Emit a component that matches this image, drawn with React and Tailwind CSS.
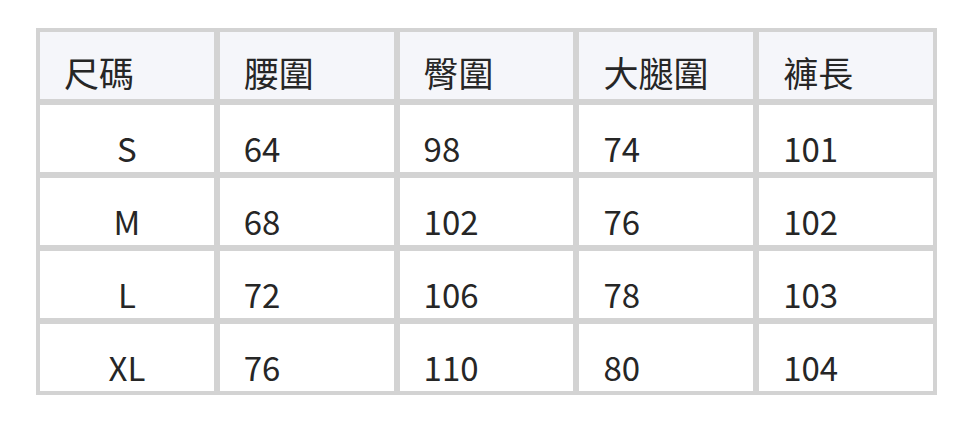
const headers = ['尺碼', '腰圍', '臀圍', '大腿圍', '褲長'];

const rows = [
  ['S', '64', '98', '74', '101'],
  ['M', '68', '102', '76', '102'],
  ['L', '72', '106', '78', '103'],
  ['XL', '76', '110', '80', '104'],
];

export default function App() {
  return (
    <div className="w-[972px] h-[422px] bg-white pt-[28px] pl-[36px] font-['Noto_Sans_CJK_TC','Noto_Sans',sans-serif] text-[#262626]">
      <div className="w-[901px] border border-[#d3d3d3] grid grid-cols-5 auto-rows-[73px]">
        {headers.map(h => (
          <div
            key={h}
            className="border-[3px] border-[#d3d3d3] bg-[#f5f6fa] flex items-end pl-6 pb-[10px] text-[35px] leading-none"
          >
            {h}
          </div>
        ))}
        {rows.map(r =>
          r.map((v, i) => (
            <div
              key={r[0] + i}
              className={`border-[3px] border-[#d3d3d3] flex items-end pb-[7px] text-[33px] leading-none ${
                i === 0 ? 'justify-center' : 'pl-6'
              }`}
            >
              {v}
            </div>
          ))
        )}
      </div>
    </div>
  );
}
